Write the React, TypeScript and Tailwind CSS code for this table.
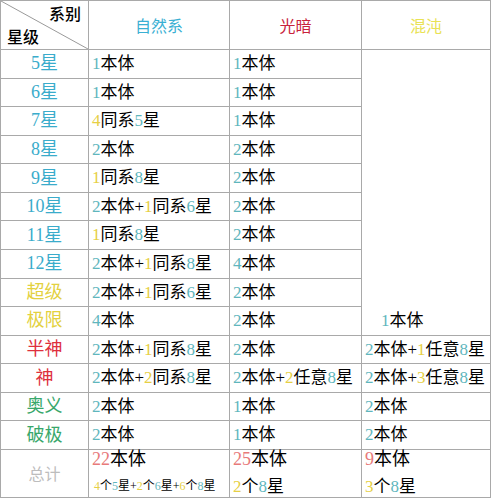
import React from 'react';

const COLORS: Record<string, string> = {
  t: '#5fb6bd', // teal digits
  y: '#e6cf45', // yellow digits
  r: '#e87a7a', // totals
};

// "{t2}本体+{y1}同系{t8}星" -> coloured pieces
function Rich({ text }: { text: string }) {
  const parts: React.ReactNode[] = [];
  const re = /\{([a-z])([^}]*)\}/g;
  let last = 0;
  let m: RegExpExecArray | null;
  let k = 0;
  while ((m = re.exec(text))) {
    if (m.index > last) parts.push(<span key={k++}>{text.slice(last, m.index)}</span>);
    parts.push(
      <span key={k++} style={{ color: COLORS[m[1]] }}>
        {m[2]}
      </span>
    );
    last = m.index + m[0].length;
  }
  if (last < text.length) parts.push(<span key={k++}>{text.slice(last)}</span>);
  return <>{parts}</>;
}

interface Row {
  label: string;
  labelColor: string;
  nature: string;
  light: string;
  chaos?: string;
}

const rows: Row[] = [
  { label: '5星', labelColor: 'text-[#3aaccb]', nature: '{t1}本体', light: '{t1}本体' },
  { label: '6星', labelColor: 'text-[#3aaccb]', nature: '{t1}本体', light: '{t1}本体' },
  { label: '7星', labelColor: 'text-[#3aaccb]', nature: '{y4}同系{t5}星', light: '{t1}本体' },
  { label: '8星', labelColor: 'text-[#3aaccb]', nature: '{t2}本体', light: '{t2}本体' },
  { label: '9星', labelColor: 'text-[#3aaccb]', nature: '{y1}同系{t8}星', light: '{t2}本体' },
  { label: '10星', labelColor: 'text-[#3aaccb]', nature: '{t2}本体+{y1}同系{t6}星', light: '{t2}本体' },
  { label: '11星', labelColor: 'text-[#3aaccb]', nature: '{y1}同系{t8}星', light: '{t2}本体' },
  { label: '12星', labelColor: 'text-[#3aaccb]', nature: '{t2}本体+{y1}同系{t8}星', light: '{t4}本体' },
  { label: '超级', labelColor: 'text-[#e3d13f]', nature: '{t2}本体+{y1}同系{t6}星', light: '{t2}本体' },
  { label: '极限', labelColor: 'text-[#e3d13f]', nature: '{t4}本体', light: '{t2}本体' },
  {
    label: '半神',
    labelColor: 'text-[#de2f3d]',
    nature: '{t2}本体+{y1}同系{t8}星',
    light: '{t2}本体',
    chaos: '{t2}本体+{y1}任意{t8}星',
  },
  {
    label: '神',
    labelColor: 'text-[#de2f3d]',
    nature: '{t2}本体+{y2}同系{t8}星',
    light: '{t2}本体+{y2}任意{t8}星',
    chaos: '{t2}本体+{y3}任意{t8}星',
  },
  { label: '奥义', labelColor: 'text-[#38a76b]', nature: '{t2}本体', light: '{t1}本体', chaos: '{t2}本体' },
  { label: '破极', labelColor: 'text-[#38a76b]', nature: '{t2}本体', light: '{t1}本体', chaos: '{t2}本体' },
];

const font = { fontFamily: '"Liberation Serif", "Noto Sans CJK SC", serif' };
const sans = { fontFamily: '"Noto Sans CJK SC", "Noto Sans", sans-serif' };

export default function App() {
  return (
    <div className="bg-white w-[493px] h-[500px]" style={font}>
      <div className="grid w-[491px] h-[498px] bg-[#a9a9a9] p-px gap-px grid-cols-[87px_140px_131px_128px] grid-rows-[48px_repeat(14,minmax(0,1fr))_47px] text-[17px] text-black">
        {/* header */}
        <div className="relative bg-white text-[16px]" style={sans}>
          <svg className="absolute inset-0" width="87" height="48">
            <line x1="0" y1="0" x2="87" y2="48" stroke="#9a9a9a" strokeWidth="1" />
          </svg>
          <span className="absolute right-[7px] top-[0px] font-medium">系别</span>
          <span className="absolute left-[6px] bottom-[1px] font-medium">星级</span>
        </div>
        <div className="bg-white flex items-center justify-center text-[16px] text-[#3ab0d3]" style={sans}>
          自然系
        </div>
        <div className="bg-white flex items-center justify-center text-[16px] text-[#c8223b]" style={sans}>
          光暗
        </div>
        <div className="bg-white flex items-center justify-center text-[16px] text-[#e9e255]" style={sans}>
          混沌
        </div>

        {rows.map((r, i) => (
          <React.Fragment key={r.label}>
            <div className={`bg-white flex items-center justify-center text-[18px] ${r.labelColor}`}>{r.label}</div>
            <div className="bg-white flex items-center pl-[3px] whitespace-nowrap">
              <Rich text={r.nature} />
            </div>
            <div className="bg-white flex items-center pl-[3px] whitespace-nowrap">
              <Rich text={r.light} />
            </div>
            {i === 0 && (
              <div className="bg-white row-span-10 flex items-end pl-[19px] whitespace-nowrap">
                <div className="h-[27.5px] flex items-center">
                  <Rich text="{t1}本体" />
                </div>
              </div>
            )}
            {r.chaos && (
              <div className="bg-white flex items-center pl-[3px] whitespace-nowrap">
                <Rich text={r.chaos} />
              </div>
            )}
          </React.Fragment>
        ))}

        {/* totals */}
        <div className="bg-white flex items-center justify-center text-[16px] text-[#bdbdbd]" style={sans}>
          总计
        </div>
        <div className="bg-white flex flex-col justify-center pl-[3px] whitespace-nowrap">
          <div className="text-[18px] leading-[27px]">
            <Rich text="{r22}本体" />
          </div>
          <div className="text-[12px] leading-[27px] pl-[2px]">
            <Rich text="{y4}个{t5}星+{y2}个{t6}星+{y6}个{t8}星" />
          </div>
        </div>
        <div className="bg-white flex flex-col justify-center pl-[3px] whitespace-nowrap">
          <div className="text-[18px] leading-[27px]">
            <Rich text="{r25}本体" />
          </div>
          <div className="leading-[27px]">
            <Rich text="{y2}个{t8}星" />
          </div>
        </div>
        <div className="bg-white flex flex-col justify-center pl-[3px] whitespace-nowrap">
          <div className="text-[18px] leading-[27px]">
            <Rich text="{r9}本体" />
          </div>
          <div className="leading-[27px]">
            <Rich text="{y3}个{t8}星" />
          </div>
        </div>
      </div>
    </div>
  );
}
